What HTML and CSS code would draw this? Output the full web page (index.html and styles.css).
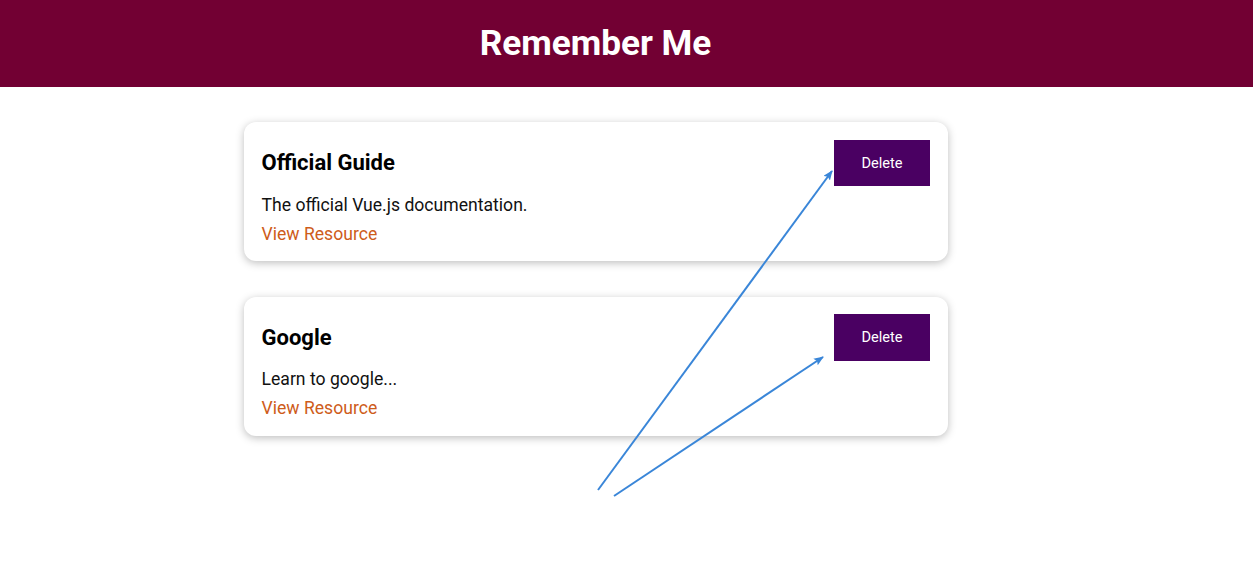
FILE: index.html
```html
<!DOCTYPE html>
<html lang="en">
<head>
<meta charset="utf-8">
<title>Remember Me</title>
<link rel="stylesheet" href="styles.css">
</head>
<body>
<header class="top">
  <h1 class="top-title">Remember Me</h1>
</header>
<main class="main">
  <ul class="list">
    <li class="card">
      <div class="card-head">
        <h3 class="card-title">Official Guide</h3>
        <button class="btn">Delete</button>
      </div>
      <p class="card-desc">The official Vue.js documentation.</p>
      <nav class="card-nav"><a class="link" href="#">View Resource</a></nav>
    </li>
    <li class="card">
      <div class="card-head">
        <h3 class="card-title">Google</h3>
        <button class="btn">Delete</button>
      </div>
      <p class="card-desc">Learn to google...</p>
      <nav class="card-nav"><a class="link" href="#">View Resource</a></nav>
    </li>
  </ul>
</main>
<svg class="arrows" width="1253" height="567" viewBox="0 0 1253 567">
  <defs>
    <marker id="ah" markerWidth="10" markerHeight="8" refX="9" refY="4" orient="auto" markerUnits="userSpaceOnUse">
      <path d="M0,0 L10,4 L0,8 L2,4 Z" fill="#3a86d8"/>
    </marker>
  </defs>
  <line x1="598" y1="490" x2="832" y2="171" stroke="#3a86d8" stroke-width="2" marker-end="url(#ah)"/>
  <line x1="614" y1="496" x2="823" y2="357" stroke="#3a86d8" stroke-width="2" marker-end="url(#ah)"/>
</svg>
</body>
</html>
```
FILE: styles.css
```css
html, body {
  margin: 0;
  padding: 0;
  font-family: Roboto, "Liberation Sans", sans-serif;
  background: #fff;
}

.top {
  height: 87px;
  background: #720033;
  display: flex;
  justify-content: center;
  align-items: center;
  padding-right: 62px;
  padding-bottom: 2px;
  box-sizing: border-box;
}

.top-title {
  margin: 0;
  color: #fff;
  font-size: 35.2px;
  font-weight: 700;
}

.main {
  padding-right: 62px;
}

.list {
  list-style: none;
  margin: 0 auto;
  padding: 0;
  max-width: 704px;
}

.card {
  border-radius: 12px;
  box-shadow: 0 2px 8px rgba(0, 0, 0, 0.26);
  padding: 17.6px 17.6px 17.6px 18px;
  margin: 35.2px auto;
  background: #fff;
}

.card-head {
  display: flex;
  justify-content: space-between;
  align-items: center;
}

.card-title {
  font-size: 22px;
  margin: 8.8px 0;
  font-weight: 700;
  color: #000;
}

.btn {
  padding: 13.2px 26.4px;
  font-family: inherit;
  font-size: 14.6px;
  background: #4a0062;
  border: 1px solid #4a0062;
  color: #fff;
  cursor: pointer;
}

.card-desc {
  margin: 8.8px 0;
  font-size: 17.6px;
  color: #111;
}

.card-nav {
  font-size: 17.6px;
}

.link {
  color: #ce5c1a;
  text-decoration: none;
}

.arrows {
  position: absolute;
  left: 0;
  top: 0;
  pointer-events: none;
}
```
